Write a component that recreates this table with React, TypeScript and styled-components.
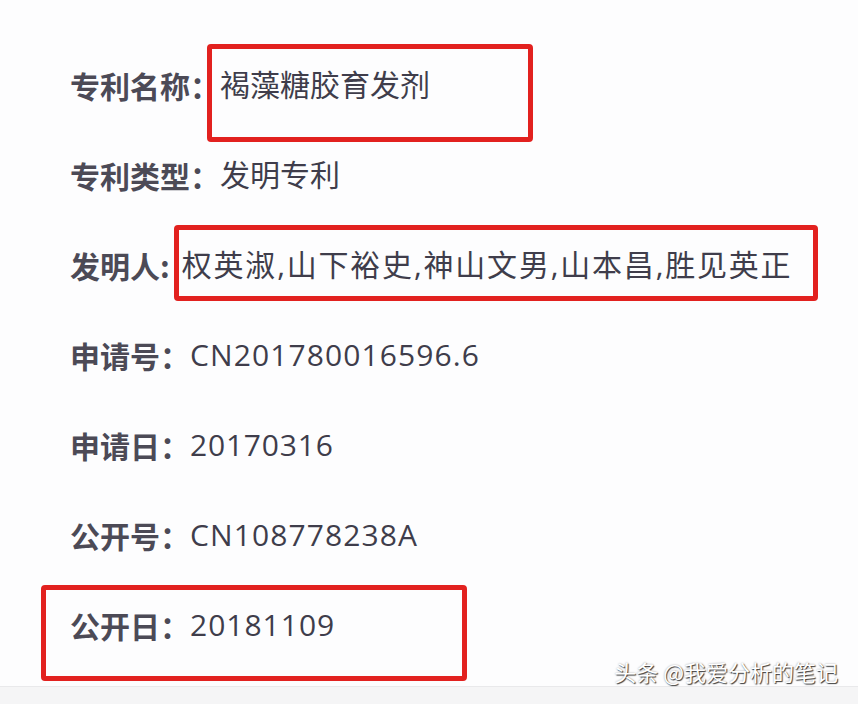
import React from 'react';
import styled, { createGlobalStyle } from 'styled-components';

const GlobalStyle = createGlobalStyle`
  html, body {
    margin: 0;
    padding: 0;
    background: #fdfdfe;
  }
  body {
    font-family: "Noto Sans CJK SC", "Noto Sans", sans-serif;
  }
`;

const Page = styled.div`
  width: 858px;
  height: 704px;
  position: relative;
  overflow: hidden;
  display: flex;
  flex-direction: column;
  background: #fdfdfe;
`;

const List = styled.div`
  height: 646px;
  padding: 40px 0 0 70px;
  display: flex;
  flex-direction: column;
`;

const Row = styled.div`
  position: relative;
  height: 90px;
  display: flex;
  align-items: center;
  font-size: 30px;
  line-height: 1;
  white-space: nowrap;
`;

const Label = styled.span<{ $gap?: number }>`
  font-weight: 700;
  color: #4c4a56;
  margin-right: ${(p) => p.$gap ?? 0}px;
`;

const Value = styled.span<{ $spacing?: number }>`
  font-family: "Open Sans", "Noto Sans CJK SC", sans-serif;
  font-weight: 400;
  color: #3f3d4b;
  letter-spacing: ${(p) => p.$spacing ?? 0}px;
`;

const Highlight = styled.div<{ $left: number; $top: number; $w: number; $h: number }>`
  position: absolute;
  left: ${(p) => p.$left}px;
  top: ${(p) => p.$top}px;
  width: ${(p) => p.$w}px;
  height: ${(p) => p.$h}px;
  box-sizing: border-box;
  border: 5px solid #e2211f;
  border-radius: 4px;
  pointer-events: none;
`;

const Footer = styled.div`
  flex: 1;
  background: #f5f5f6;
  border-top: 1px solid #e9e9eb;
`;

const Watermark = styled.div`
  position: absolute;
  right: 20px;
  top: 660px;
  font-size: 22px;
  line-height: 1;
  color: #ffffff;
  text-shadow: 1px 1px 1px rgba(0, 0, 0, 0.75), 0 0 2px rgba(0, 0, 0, 0.35);
`;

type Item = {
  label: string;
  value: string;
  gap?: number;
  spacing?: number;
  box?: { left: number; top: number; w: number; h: number };
};

const items: Item[] = [
  { label: '专利名称：', value: '褐藻糖胶育发剂', box: { left: 137, top: 4, w: 326, h: 98 } },
  { label: '专利类型：', value: '发明专利' },
  {
    label: '发明人:',
    value: '权英淑,山下裕史,神山文男,山本昌,胜见英正',
    gap: 12,
    spacing: 1.8,
    box: { left: 104, top: 5, w: 644, h: 76 },
  },
  { label: '申请号：', value: 'CN201780016596.6', spacing: 1.1 },
  { label: '申请日：', value: '20170316', spacing: 0.8 },
  { label: '公开号：', value: 'CN108778238A', spacing: 1.1 },
  { label: '公开日：', value: '20181109', spacing: 1, box: { left: -29, top: 5, w: 426, h: 96 } },
];

export default function App() {
  return (
    <Page>
      <GlobalStyle />
      <List>
        {items.map((item) => (
          <Row key={item.label}>
            <Label $gap={item.gap}>{item.label}</Label>
            <Value $spacing={item.spacing}>{item.value}</Value>
            {item.box && (
              <Highlight $left={item.box.left} $top={item.box.top} $w={item.box.w} $h={item.box.h} />
            )}
          </Row>
        ))}
      </List>
      <Footer />
      <Watermark>头条 @我爱分析的笔记</Watermark>
    </Page>
  );
}
